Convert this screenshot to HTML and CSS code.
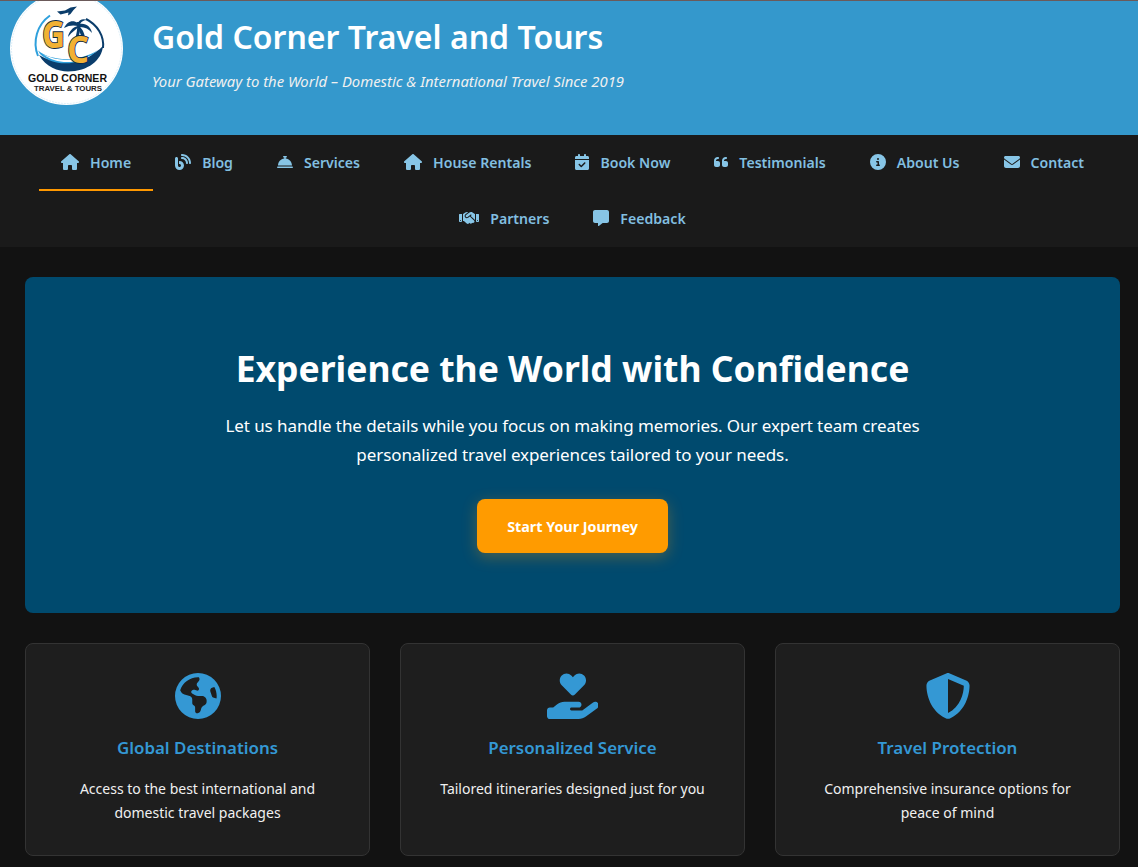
FILE: index.html
```html
<!DOCTYPE html>
<html lang="en">
<head>
<meta charset="utf-8">
<title>Gold Corner Travel and Tours</title>
<link rel="stylesheet" href="styles.css">
</head>
<body>
<header class="site-header">
  <svg class="logo" viewBox="0 0 113 113">
    <circle cx="56.500" cy="56.500" r="56.500" fill="#fff"/>
    <circle cx="56.500" cy="56.500" r="55" fill="none" stroke="#cfe6f3" stroke-width=".7" stroke-dasharray="2 1"/>
    <path d="M40 23.500A34 34 0 0 0 28 64" fill="none" stroke="#2fa0dc" stroke-width="2"/>
    <path d="M76 27A34 30 0 0 1 93 56" fill="none" stroke="#0b3d6b" stroke-width="2"/>
    <path d="M29 63C36 75 48 79.500 58 79.500C78 79.500 92 68 93 54C80 68 50 76 29 63Z" fill="#0b3d6b"/>
    <path d="M28 58.500C42 70 70 70 88 58C72 74 44 76 30 62Z" fill="#2fa0dc"/>
    <path d="M33 62C46 70 68 69 82 63C68 72 46 73 33 62Z" fill="#fff"/>
    <g transform="translate(-10 12)">
      <path d="M77 18C78 26 76 34 72 42L75 42C79 34 81 26 80 18Z" fill="#0b3d6b"/>
      <path d="M78 19C72 15 67 18 64 24C69 21 74 21 78 22C73 23 69 27 68 33C72 28 76 25 79 23C79 28 81 33 85 36C85 30 83 26 80 23C85 23 89 25 92 29C91 23 86 19 80 20C82 17 84 16 87 16C83 14 79 16 78 19Z" fill="#0b3d6b"/>
    </g>
    <path d="M47 19.500L55 18.500L60.500 15.500L67 14.500L63.500 18L60.500 22L58 23.500L58.500 20.500L50.500 22.500Z" fill="#0b3d6b"/>
    <text class="logo-letter" x="32" y="55.500" textLength="23" lengthAdjust="spacingAndGlyphs">G</text>
    <text class="logo-letter" x="57" y="70.500" textLength="22" lengthAdjust="spacingAndGlyphs">C</text>
    <text class="logo-name" x="18" y="90.300" textLength="79" lengthAdjust="spacingAndGlyphs">GOLD CORNER</text>
    <text class="logo-sub" x="24" y="98.700" textLength="68" lengthAdjust="spacingAndGlyphs">TRAVEL &amp; TOURS</text>
  </svg>
  <div class="brand-text">
    <h1 class="brand-title">Gold Corner Travel and Tours</h1>
    <p class="brand-tag">Your Gateway to the World – Domestic &amp; International Travel Since 2019</p>
  </div>
</header>

<nav class="main-nav">
  <a class="nav-link active" href="#"><svg class="nav-icon" viewBox="0 0 576 512"><path d="M575.800 255.500c0 18-15 32.100-32 32.100h-32l.7 160.200c0 2.700-.2 5.400-.5 8.100V472c0 22.100-17.900 40-40 40H456c-1.100 0-2.200 0-3.300-.1c-1.400 .1-2.800 .1-4.200 .1H416 392c-22.100 0-40-17.900-40-40V448 384c0-17.700-14.300-32-32-32H256c-17.700 0-32 14.300-32 32v64 24c0 22.100-17.900 40-40 40H160 128.100c-1.500 0-3-.1-4.500-.2c-1.200 .1-2.400 .2-3.600 .2H104c-22.100 0-40-17.900-40-40V360c0-.9 0-1.900 .1-2.800V287.600H32c-18 0-32-14-32-32.100c0-9 3-17 10-24L266.400 8c7-7 15-8 22-8s15 2 21 7L564.800 231.500c8 7 12 15 11 24z"/></svg><span>Home</span></a>
  <a class="nav-link" href="#"><svg class="nav-icon" viewBox="0 0 512 512"><path d="M192 32c0 17.700 14.300 32 32 32c123.700 0 224 100.300 224 224c0 17.700 14.300 32 32 32s32-14.300 32-32C512 128.900 383.100 0 224 0c-17.700 0-32 14.300-32 32zm0 96c0 17.700 14.300 32 32 32c70.700 0 128 57.300 128 128c0 17.700 14.300 32 32 32s32-14.300 32-32c0-106-86-192-192-192c-17.700 0-32 14.300-32 32zM96 144c0-26.500-21.500-48-48-48S0 117.500 0 144V368c0 79.500 64.500 144 144 144s144-64.500 144-144s-64.500-144-144-144H128v96h16c26.500 0 48 21.500 48 48s-21.500 48-48 48s-48-21.500-48-48V144z"/></svg><span>Blog</span></a>
  <a class="nav-link" href="#"><svg class="nav-icon" viewBox="0 0 512 512"><path d="M216 64c-13.300 0-24 10.700-24 24s10.700 24 24 24h16v33.300C119.600 157.200 32 252.400 32 368H480c0-115.600-87.600-210.800-200-222.700V112h16c13.300 0 24-10.700 24-24s-10.700-24-24-24H256 216zM24 400c-13.300 0-24 10.700-24 24s10.700 24 24 24H488c13.300 0 24-10.700 24-24s-10.700-24-24-24H24z"/></svg><span>Services</span></a>
  <a class="nav-link" href="#"><svg class="nav-icon" viewBox="0 0 576 512"><path d="M575.800 255.500c0 18-15 32.100-32 32.100h-32l.7 160.200c0 2.700-.2 5.400-.5 8.100V472c0 22.100-17.900 40-40 40H456c-1.100 0-2.200 0-3.300-.1c-1.400 .1-2.800 .1-4.200 .1H416 392c-22.100 0-40-17.900-40-40V448 384c0-17.700-14.300-32-32-32H256c-17.700 0-32 14.300-32 32v64 24c0 22.100-17.900 40-40 40H160 128.100c-1.500 0-3-.1-4.500-.2c-1.200 .1-2.400 .2-3.600 .2H104c-22.100 0-40-17.900-40-40V360c0-.9 0-1.900 .1-2.800V287.600H32c-18 0-32-14-32-32.100c0-9 3-17 10-24L266.400 8c7-7 15-8 22-8s15 2 21 7L564.800 231.500c8 7 12 15 11 24z"/></svg><span>House Rentals</span></a>
  <a class="nav-link" href="#"><svg class="nav-icon" viewBox="0 0 448 512"><path d="M128 0c17.700 0 32 14.300 32 32V64H288V32c0-17.700 14.300-32 32-32s32 14.300 32 32V64h48c26.500 0 48 21.500 48 48v48H0V112C0 85.500 21.500 64 48 64H96V32c0-17.700 14.300-32 32-32zM0 192H448V464c0 26.500-21.500 48-48 48H48c-26.500 0-48-21.500-48-48V192zM329 305c9.400-9.400 9.400-24.600 0-33.900s-24.600-9.400-33.900 0l-95 95-47-47c-9.400-9.400-24.600-9.400-33.900 0s-9.400 24.600 0 33.900l64 64c9.400 9.400 24.600 9.400 33.900 0L329 305z"/></svg><span>Book Now</span></a>
  <a class="nav-link" href="#"><svg class="nav-icon" viewBox="0 0 448 512"><path d="M0 216C0 149.700 53.700 96 120 96h8c17.700 0 32 14.300 32 32s-14.300 32-32 32h-8c-30.900 0-56 25.100-56 56v8h64c35.300 0 64 28.700 64 64v64c0 35.300-28.700 64-64 64H64c-35.300 0-64-28.700-64-64V320 288 216zm256 0c0-66.300 53.700-120 120-120h8c17.700 0 32 14.300 32 32s-14.300 32-32 32h-8c-30.900 0-56 25.100-56 56v8h64c35.300 0 64 28.700 64 64v64c0 35.300-28.700 64-64 64H320c-35.300 0-64-28.700-64-64V320 288 216z"/></svg><span>Testimonials</span></a>
  <a class="nav-link" href="#"><svg class="nav-icon" viewBox="0 0 512 512"><path d="M256 512A256 256 0 1 0 256 0a256 256 0 1 0 0 512zM216 336h24V272H216c-13.300 0-24-10.700-24-24s10.700-24 24-24h48c13.300 0 24 10.700 24 24v88h8c13.300 0 24 10.700 24 24s-10.700 24-24 24H216c-13.300 0-24-10.700-24-24s10.700-24 24-24zm40-208a32 32 0 1 1 0 64 32 32 0 1 1 0-64z"/></svg><span>About Us</span></a>
  <a class="nav-link" href="#"><svg class="nav-icon" viewBox="0 0 512 512"><path d="M48 64C21.500 64 0 85.500 0 112c0 15.100 7.100 29.300 19.200 38.400L236.800 313.600c11.400 8.500 27 8.500 38.400 0L492.800 150.400c12.100-9.100 19.200-23.300 19.200-38.400c0-26.500-21.500-48-48-48H48zM0 176V384c0 35.300 28.700 64 64 64H448c35.300 0 64-28.700 64-64V176L294.400 339.200c-22.800 17.100-54 17.100-76.800 0L0 176z"/></svg><span>Contact</span></a>
  <a class="nav-link" href="#"><svg class="nav-icon" viewBox="0 0 640 512"><path d="M323.400 85.200l-96.800 78.400c-16.100 13-19.200 36.400-7 53.100c12.900 17.800 38 21.300 55.300 7.800l99.300-77.200c7-5.400 17-4.200 22.500 2.800s4.200 17-2.800 22.500l-20.900 16.200L512 316.800V128h-.7l-3.900-2.500L434.800 79c-15.300-9.800-33.200-15-51.400-15c-21.800 0-43 7.500-60 21.200zm22.800 124.400l-51.700 40.200C263 274.400 217.300 268 193.700 235.600c-22.200-30.500-16.600-73.100 12.700-96.800l83.200-67.300c-11.600-4.900-24.100-7.400-36.800-7.400C234 64 215.700 69.600 200 80l-72 48V352h28.200l91.400 83.400c19.600 17.900 49.900 16.500 67.800-3.100c5.500-6.100 9.200-13.200 11.100-20.600l17 15.600c19.500 17.900 49.900 16.600 67.800-2.900c4.500-4.900 7.800-10.600 9.900-16.500c19.400 13 45.800 10.300 62.100-7.500c17.900-19.500 16.600-49.900-2.900-67.800l-134.200-123zM16 128c-8.800 0-16 7.200-16 16V352c0 17.700 14.300 32 32 32H64c17.700 0 32-14.300 32-32V128H16zM48 320a16 16 0 1 1 0 32 16 16 0 1 1 0-32zM544 128V352c0 17.700 14.300 32 32 32h32c17.700 0 32-14.300 32-32V144c0-8.800-7.200-16-16-16H544zm32 208a16 16 0 1 1 32 0 16 16 0 1 1 -32 0z"/></svg><span>Partners</span></a>
  <a class="nav-link" href="#"><svg class="nav-icon" viewBox="0 0 512 512"><path d="M64 0C28.700 0 0 28.700 0 64V352c0 35.300 28.700 64 64 64h96v80c0 6.100 3.400 11.600 8.800 14.300s11.900 2.100 16.800-1.500L309.300 416H448c35.300 0 64-28.700 64-64V64c0-35.300-28.700-64-64-64H64z"/></svg><span>Feedback</span></a>
</nav>

<main class="page">
  <section class="hero">
    <h2 class="hero-title">Experience the World with Confidence</h2>
    <p class="hero-text">Let us handle the details while you focus on making memories. Our expert team creates personalized travel experiences tailored to your needs.</p>
    <a class="hero-btn" href="#">Start Your Journey</a>
  </section>
  <section class="features">
    <article class="card">
      <svg class="card-icon" viewBox="0 0 512 512"><path d="M57.700 193l9.400 16.400c8.300 14.500 21.900 25.200 38 29.800L163 255.700c17.200 4.900 29 20.600 29 38.500v39.900c0 11 6.200 21 16 25.900s16 14.900 16 25.900v39c0 15.600 14.900 26.900 29.900 22.600c16.100-4.600 28.600-17.500 32.700-33.800l2.800-11.200c4.200-16.900 15.200-31.400 30.300-40l8.100-4.600c15-8.500 24.200-24.500 24.200-41.700v-8.300c0-12.700-5.100-24.900-14.100-33.900l-3.900-3.900c-9-9-21.200-14.100-33.900-14.100H257c-11.100 0-22.100-2.900-31.800-8.400l-34.500-19.700c-4.300-2.500-7.600-6.500-9.200-11.200c-3.200-9.600 1.100-20 10.200-24.500l5.900-3c6.600-3.300 14.300-3.900 21.300-1.500l23.200 7.700c8.200 2.700 17.200-.4 21.900-7.500c4.700-7 4.200-16.300-1.200-22.800l-13.600-16.300c-10-12-9.900-29.500 .3-41.300l15.700-18.300c8.800-10.300 10.200-25 3.500-36.700l-2.400-4.200c-3.500-.2-6.900-.3-10.400-.3C163.100 48 84.400 108.900 57.700 193zM464 256c0-36.800-9.600-71.400-26.400-101.500L412 164.800c-15.700 6.300-23.800 23.800-18.500 39.800l16.900 50.700c3.500 10.400 12 18.300 22.600 20.900l29.100 7.300c1.200-9 1.800-18.200 1.800-27.500zM0 256a256 256 0 1 1 512 0A256 256 0 1 1 0 256z"/></svg>
      <h3 class="card-title">Global Destinations</h3>
      <p class="card-text">Access to the best international and domestic travel packages</p>
    </article>
    <article class="card">
      <svg class="card-icon" viewBox="0 0 576 512"><path d="M163.900 136.900c-29.400-29.800-29.400-78.200 0-108s77-29.800 106.400 0l17.700 18 17.700-18c29.400-29.800 77-29.800 106.400 0s29.400 78.200 0 108L310.500 240.100c-6.200 6.300-14.300 9.400-22.500 9.400s-16.300-3.100-22.500-9.400L163.900 136.900zM568.200 336.300c13.100 17.800 9.300 42.800-8.500 55.900L433.100 485.500c-23.400 17.200-51.600 26.500-80.700 26.500H192 32c-17.700 0-32-14.300-32-32V416c0-17.700 14.300-32 32-32H68.800l44.900-36c22.700-18.200 50.900-28 80-28H272h16 64c17.700 0 32 14.300 32 32s-14.300 32-32 32H288 272c-8.800 0-16 7.200-16 16s7.200 16 16 16H392.600l119.700-88.200c17.800-13.100 42.800-9.300 55.900 8.500z"/></svg>
      <h3 class="card-title">Personalized Service</h3>
      <p class="card-text">Tailored itineraries designed just for you</p>
    </article>
    <article class="card">
      <svg class="card-icon" viewBox="0 0 512 512"><path d="M256 0c4.600 0 9.200 1 13.400 2.900L457.700 82.800c22 9.300 38.400 31 38.300 57.200c-.5 99.200-41.300 280.700-213.600 363.200c-16.700 8-36.100 8-52.800 0C57.300 420.700 16.500 239.200 16 140c-.1-26.200 16.300-47.900 38.300-57.200L242.700 2.900C246.800 1 251.400 0 256 0zm0 66.800V444.800C394 378 431.100 230.100 432 141.400L256 66.800l0 0z"/></svg>
      <h3 class="card-title">Travel Protection</h3>
      <p class="card-text">Comprehensive insurance options for peace of mind</p>
    </article>
  </section>
</main>
</body>
</html>
```

FILE: styles.css
```css
* { box-sizing: border-box; }
html, body { margin: 0; padding: 0; }
body {
  background: #121212;
  color: #fff;
  font-family: "Noto Sans", "Open Sans", sans-serif;
  overflow: hidden;
}
.site-header {
  height: 135px;
  background: #3498cc;
  border-top: 1px solid #6b5a5a;
  display: flex;
  align-items: flex-start;
  gap: 29px;
  padding-left: 10px;
  overflow: hidden;
}
.logo { width: 113px; height: 113px; margin-top: -9.500px; flex: none; }
.logo-letter { font: 700 38px "Open Sans", sans-serif; fill: #f2b134; stroke: #0b2a4a; stroke-width: 1.800; paint-order: stroke; }
.logo-name { font: 700 10px "Liberation Sans", sans-serif; fill: #111; }
.logo-sub { font: 700 7px "Liberation Sans", sans-serif; fill: #222; }
.brand-text { padding-top: 15px; }
.brand-title { margin: 0; font-size: 32px; font-weight: 600; line-height: 42px; color: #fff; }
.brand-tag { margin: 11px 0 0; font-size: 14.850px; font-style: italic; line-height: 24px; color: #f0f0f0; }
.main-nav {
  background: #1a1a1a;
  display: flex;
  flex-wrap: wrap;
  justify-content: center;
  height: 112px;
  padding-left: 7px;
}
.nav-link {
  display: flex;
  align-items: center;
  gap: 11px;
  height: 56px;
  padding: 0 22px;
  color: #82bfe0;
  font-size: 14.100px;
  font-weight: 600;
  text-decoration: none;
  border-bottom: 2px solid transparent;
}
.nav-link.active { border-bottom-color: #ff9800; }
.nav-icon { height: 16px; fill: #87c5e6; flex: none; }
.page { padding: 30px 18px 0 25px; }
.hero {
  height: 336px;
  background: #004a6e;
  border-radius: 8px;
  padding-top: 63px;
  display: flex;
  flex-direction: column;
  align-items: center;
}
.hero-title { margin: 0; font-size: 35.500px; font-weight: 700; line-height: 56px; }
.hero-text { margin: 15px 0 0; width: 720px; text-align: center; font-size: 17px; letter-spacing: -.08px; line-height: 29px; }
.hero-btn {
  margin-top: 30px;
  width: 191px;
  height: 54px;
  display: flex;
  align-items: center;
  justify-content: center;
  background: #ff9b00;
  color: #fff;
  border-radius: 8px;
  font-size: 14.300px;
  font-weight: 700;
  text-decoration: none;
  box-shadow: 0 4px 15px rgba(255, 152, 0, .3);
}
.features { display: grid; grid-template-columns: repeat(3, 1fr); gap: 30px; margin-top: 30px; }
.card {
  height: 213px;
  background: #1e1e1e;
  border: 1px solid #333;
  border-radius: 8px;
  padding: 29px 30px 0;
  text-align: center;
}
.card-icon { display: block; height: 46px; margin: 0 auto; fill: #3498d4; }
.card-title { margin: 15px 0 0; font-size: 16.900px; font-weight: 600; line-height: 28px; color: #3498d4; }
.card-text { margin: 15px 0 0; font-size: 14px; line-height: 24px; color: #f0f0f0; }
```
